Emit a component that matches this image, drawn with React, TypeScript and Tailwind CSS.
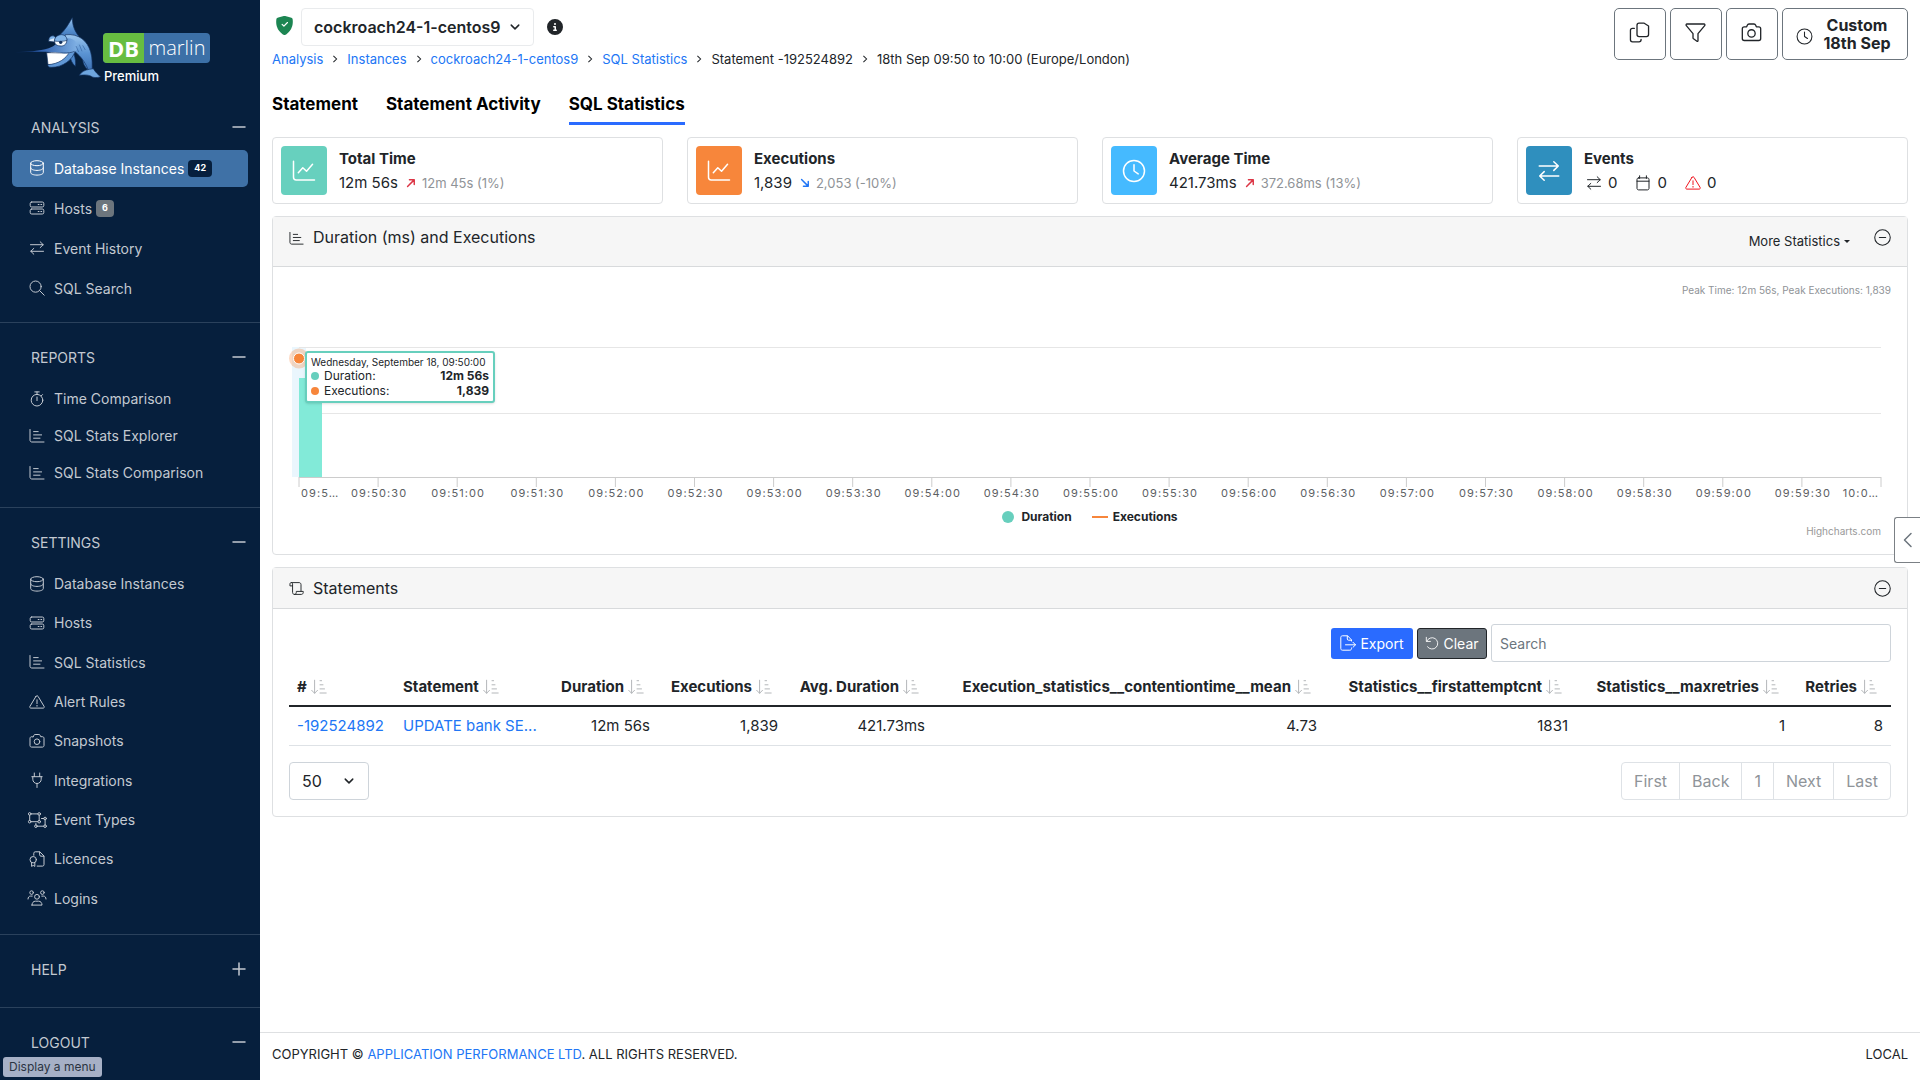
import React from "react";
import { BsShieldFillCheck } from "react-icons/bs";
import { FaCircleInfo } from "react-icons/fa6";

const icons: Record<string, React.ReactNode> = {
  database: (
    <>
      <ellipse cx="8" cy="3.2" rx="6.3" ry="2.5" />
      <path d="M1.7 3.2v9.4c0 1.4 2.8 2.5 6.3 2.5s6.3-1.1 6.3-2.5V3.2M1.7 7.9c0 1.4 2.8 2.5 6.3 2.5s6.3-1.1 6.3-2.5" />
    </>
  ),
  hosts: (
    <>
      <rect x="1.2" y="2" width="13.6" height="5" rx="1.5" />
      <rect x="1.2" y="9" width="13.6" height="5" rx="1.5" />
      <path d="M9.2 4.5h.8M11.9 4.5h.8M9.2 11.5h.8M11.9 11.5h.8" />
    </>
  ),
  swap: <path d="M1.5 4.7h12.7M11.2 1.8l3 2.9-3 2.9M14.5 11.3H1.8M4.8 8.4l-3 2.9 3 2.9" />,
  search: (
    <>
      <circle cx="6.6" cy="6.6" r="5.6" />
      <path d="M10.7 10.7l4.5 4.5" />
    </>
  ),
  stopwatch: (
    <>
      <circle cx="8" cy="9.2" r="5.8" />
      <path d="M5.8.9h4.4M8 .9v2.4M8 6v3.6M12.3 4.8l1.2-1.2" />
    </>
  ),
  chartBar: <path d="M1 1.5v10.7c0 1 .8 1.8 1.8 1.8H15M4.6 3.6h4.6M4.6 6.9h8M4.6 10.2h6.4" />,
  warning: (
    <>
      <path d="M7 2.3.9 12.4c-.5.8 0 1.7 1 1.7h12.2c1 0 1.5-.9 1-1.7L9 2.3c-.5-.8-1.5-.8-2 0z" />
      <path d="M8 5.8v3.8M8 11.4v.8" />
    </>
  ),
  camera: (
    <>
      <path d="M4.3 3.7 4.8 2.4c.2-.5.7-.9 1.3-.9h3.8c.6 0 1.1.4 1.3.9l.5 1.3h1.8c.8 0 1.5.7 1.5 1.5v7.4c0 .8-.7 1.5-1.5 1.5h-11c-.8 0-1.5-.7-1.5-1.5V5.2c0-.8.7-1.5 1.5-1.5z" />
      <circle cx="8" cy="8.7" r="2.8" />
    </>
  ),
  plug: <path d="M5.3 1v3.6M10.7 1v3.6M2.8 4.7h10.4M3.8 4.7v2.6a4.2 4.2 0 0 0 8.4 0V4.7M8 11.5V15.5" />,
  objectGroup: (
    <>
      <path d="M.7 3.2v5.200M10.200 3.200v5.200M2 1.900h6.900M2 9.700h6.900" />
      <circle cx=".7" cy="1.900" r="1.300" />
      <circle cx="10.200" cy="1.900" r="1.300" />
      <circle cx=".7" cy="9.700" r="1.300" />
      <circle cx="10.200" cy="9.700" r="1.300" />
      <path d="M12.500 6.500h2.300M16.100 7.800v5.100M8.200 14.200h6.600M6.900 11.500v1.400" />
      <circle cx="16.100" cy="6.500" r="1.300" />
      <circle cx="16.100" cy="14.200" r="1.300" />
      <circle cx="6.900" cy="14.200" r="1.300" />
    </>
  ),
  licence: (
    <>
      <path d="M4.8 4.3V2.200C4.800 1.400 5.400.8 6.200.8h4.600l4.200 4.200v8.700c0 .8-.6 1.400-1.400 1.400H8.200M10.600 1v2.800c0 .8.600 1.400 1.400 1.400h2.800" />
      <circle cx="4.200" cy="8.700" r="3.200" />
      <path d="M2.600 11.600v3.800l1.600-1 1.600 1v-3.800" />
    </>
  ),
  users: (
    <>
      <circle cx="2.600" cy="2.600" r="1.800" />
      <circle cx="13.400" cy="2.600" r="1.800" />
      <circle cx="8" cy="6.800" r="2.400" />
      <path d="M3 15.100h10c0-2.400-1.400-3.900-3.400-3.900H6.400c-2 0-3.400 1.500-3.400 3.900zM-1 9c0-1.700 1-2.900 2.500-2.900h1.700M17 9c0-1.700-1-2.900-2.500-2.900h-1.700" />
    </>
  ),
  minus: <path d="M2 8h12" strokeWidth="1.500" />,
  plus: <path d="M2 8h12M8 2v12" strokeWidth="1.500" />,
  chartLine: <path d="M1 1.500v10.700c0 1 .8 1.800 1.800 1.800H15M4.200 9.200l3-3.400 2.500 2.400 4-4.700" />,
  clock: (
    <>
      <circle cx="8" cy="8" r="7" />
      <path d="M8 3.800V8l2.800 1.900" />
    </>
  ),
  calendar: (
    <path d="M4.600.8v2.600M11.400.8v2.600M2 6.200h12M3.500 2.900h9c.8 0 1.500.7 1.500 1.500v9c0 .8-.7 1.500-1.500 1.500h-9c-.8 0-1.500-.7-1.500-1.500v-9c0-.8.7-1.500 1.500-1.500z" />
  ),
  circleMinus: (
    <>
      <circle cx="8" cy="8" r="7.300" />
      <path d="M5 8h6" />
    </>
  ),
  scroll: (
    <>
      <path d="M3.800 5.200H1V3.300c0-.9.600-1.600 1.400-1.600s1.400.7 1.400 1.600v8.900c0 1.200.9 2.100 2 2.100s2-.9 2-2.100v-1.100h7.400v1.100c0 1.200-.9 2.100-2 2.100H5.800" />
      <path d="M2.400 1.700h8.300c1.200 0 2.100.9 2.100 2.100v7" />
    </>
  ),
  sort: <path d="M3.600 1.200v13M.7 11.300l2.900 3 2.900-3M9 1.700h1.600M9 5.800h3M9 9.900h4.500M9 14h6.200" />,
  copy: (
    <>
      <path d="M7.700.8h3.600L14.900 3v6.600c0 .9-.7 1.600-1.600 1.600H7.700c-.9 0-1.600-.7-1.600-1.600V2.400C6.100 1.500 6.800.8 7.700.8z" />
      <path d="M4.100 4.800H2.700c-.9 0-1.600.7-1.600 1.600v7.200c0 .9.700 1.600 1.600 1.600h4.900c.9 0 1.600-.7 1.600-1.600v-.4" />
    </>
  ),
  filter: (
    <path d="M1.500 1.500h13c.6 0 .9.700.5 1.200L9.900 8.900v5.400c0 .4-.5.600-.8.400l-2.600-1.900c-.3-.2-.4-.4-.4-.7V8.900L1 2.700c-.4-.5-.1-1.200.5-1.200z" />
  ),
  exportFile: (
    <>
      <path d="M11.500 6V4.900L7.600.8H2.400C1.500.8.800 1.500.800 2.400v11.200c0 .9.700 1.600 1.600 1.600h7.500c.9 0 1.600-.7 1.600-1.600V13M7.300 1v3c0 .7.500 1.200 1.200 1.200h2.800" />
      <path d="M5.500 9.800h10M13 7.300l2.500 2.500-2.500 2.500" />
    </>
  ),
  undo: <path d="M1.500 1.500v4.700h4.700M2 6a6.500 6.500 0 1 1 .8 6.300" />,
  chevronDown: <path d="M3 5.500l5 5 5-5" strokeWidth="2" />,
  chevronLeft: <path d="M11 1.500 4.500 8l6.500 6.500" strokeWidth="1.500" />,
  upRight: <path d="M2.500 13.500 13 3M5.500 2.800H13.200V10.500" strokeWidth="2.300" />,
  downRight: <path d="M2.500 2.500 13 13M13.200 5.500V13.200H5.500" strokeWidth="2.300" />,
};

function Icon({ name, className = "size-4" }: { name: string; className?: string }) {
  return (
    <svg
      viewBox="0 0 16 16"
      fill="none"
      stroke="currentColor"
      strokeWidth="1"
      strokeLinecap="round"
      strokeLinejoin="round"
      aria-hidden="true"
      className={`inline-block shrink-0 overflow-visible ${className}`}
    >
      {icons[name]}
    </svg>
  );
}

function Marlin() {
  return (
    <svg viewBox="0 0 300 225" className="h-[75px] w-[100px]" aria-label="Marlin" role="img">
      <defs>
        <linearGradient id="body" x1="0" y1="0" x2="0" y2="1">
          <stop offset="0" stopColor="#9cc6ee" />
          <stop offset="0.500" stopColor="#5b94d3" />
          <stop offset="1" stopColor="#3a6fb4" />
        </linearGradient>
        <linearGradient id="bill" x1="0" y1="0" x2="1" y2="0">
          <stop offset="0" stopColor="#0b2a6a" stopOpacity="0.500" />
          <stop offset="0.400" stopColor="#2b5cab" />
          <stop offset="1" stopColor="#7fb0e4" />
        </linearGradient>
      </defs>
      <g stroke="#12305f" strokeWidth="2" strokeLinejoin="round">
        <path d="M150 74C166 60 178 38 187 23c0 20 5 38 20 56l-30 8z" fill="url(#body)" />
        <path d="M180 138c2 12 6 22 16 31 2-12 0-24-4-36zM218 146c0 14 6 24 16 33 2-10 2-18-2-30z" fill="#4c86c9" />
        <path d="M166 74c40-4 66 18 76 52 6 20 4 40 5 58l-10 2c-8-24-22-46-46-64l-30-16z" fill="url(#body)" />
        <path d="M238 178c-14 2-24 8-30 18 14-2 24-2 34 2 8 6 18 6 30 2-8-6-16-14-22-24z" fill="#6ea6df" />
        <path d="M110 128l4 36c26 4 52-10 66-30l-6-16z" fill="#fff" />
        <path d="M114 164c-2 4 2 8 10 8 34 0 64-22 72-50l-16 2c-12 22-34 38-66 40z" fill="#6198d6" />
        <path d="M12 127c40-1 76-4 104-12 20-6 30-24 54-30 24-2 36 16 30 34-6 12-24 14-50 9-40-4-90-2-138-1z" fill="url(#bill)" stroke="none" />
        <path d="M110 128c40 0 66 4 84-4" fill="none" />
        <path d="M116 94c0-12 14-18 20-8l-2 10z" fill="#dcebfa" />
        <path d="M134 94c2-18 30-24 36-6 2 12-6 20-16 20-12 0-20-4-20-14z" fill="#f5faff" />
        <path d="M116 90c2-14 16-16 21-7M133 93c2-24 38-26 38-2-12 4-26 4-38 2z" fill="#7fb3e8" />
      </g>
      <circle cx="152" cy="97" r="5" fill="#12305f" />
      <path d="M198 108l8 18M208 104l8 20M218 106l8 14" stroke="#25508f" strokeWidth="1.500" fill="none" />
    </svg>
  );
}

type Item = { icon: string; label: string; badge?: string; active?: boolean };
type Section = { title: string; open: boolean; list: string; items: Item[] };

const sections: Section[] = [
  {
    title: "ANALYSIS",
    open: true,
    list: "auto-rows-[40px] pb-[14px]",
    items: [
      { icon: "database", label: "Database Instances", badge: "42", active: true },
      { icon: "hosts", label: "Hosts", badge: "6" },
      { icon: "swap", label: "Event History" },
      { icon: "search", label: "SQL Search" },
    ],
  },
  {
    title: "REPORTS",
    open: true,
    list: "auto-rows-[37px] pt-[2px] pb-4",
    items: [
      { icon: "stopwatch", label: "Time Comparison" },
      { icon: "chartBar", label: "SQL Stats Explorer" },
      { icon: "chartBar", label: "SQL Stats Comparison" },
    ],
  },
  {
    title: "SETTINGS",
    open: true,
    list: "h-[371px] auto-rows-fr pt-px pb-4",
    items: [
      { icon: "database", label: "Database Instances" },
      { icon: "hosts", label: "Hosts" },
      { icon: "chartBar", label: "SQL Statistics" },
      { icon: "warning", label: "Alert Rules" },
      { icon: "camera", label: "Snapshots" },
      { icon: "plug", label: "Integrations" },
      { icon: "objectGroup", label: "Event Types" },
      { icon: "licence", label: "Licences" },
      { icon: "users", label: "Logins" },
    ],
  },
  { title: "HELP", open: false, list: "pb-[17px]", items: [] },
  { title: "LOGOUT", open: true, list: "", items: [] },
];

function Sidebar() {
  return (
    <aside className="sticky top-0 h-screen w-[260px] shrink-0 overflow-hidden bg-[#061f3d] text-[#c3c9d1]">
      <div className="flex h-[93px] pt-[10px] pl-[10px]">
        <Marlin />
        <div className="-ml-[7px] pt-[23px]">
          <div className="flex h-[30px] w-[107px] items-center overflow-hidden rounded-[4px] bg-[#3c70a7] leading-none text-white">
            <span className="flex h-full w-[41px] items-center justify-center bg-[#67bd41] font-['Open_Sans'] text-[22px] font-bold">DB</span>
            <span className="flex-1 pb-px text-center font-['Open_Sans'] text-[20px] font-light">marlin</span>
          </div>
          <div className="mt-[3px] pl-px text-[13px] leading-5 font-medium text-white">Premium</div>
        </div>
      </div>
      <nav>
        {sections.map((s, i) => (
          <section key={s.title} className={i ? "border-t border-[#2a415c] pt-[13px]" : "pt-[13px]"}>
            <button className="flex h-[42px] w-full items-center justify-between pr-[13px] pl-[31px] text-[14px]">
              {s.title}
              <Icon name={s.open ? "minus" : "plus"} />
            </button>
            <ul className={`grid ${s.list}`}>
              {s.items.map((it) => (
                <li key={it.label} className="flex items-center px-3">
                  <a
                    href="#"
                    className={`flex h-[37px] w-full items-center rounded-[5px] pl-[17px] text-[14px] ${it.active ? "bg-[#3f71a6] text-white" : ""}`}
                  >
                    <Icon name={it.icon} />
                    <span className="ml-[9px]">{it.label}</span>
                    {it.badge && (
                      <span
                        className={`ml-1 flex h-[17px] items-center rounded-[4px] px-[6px] text-[9px] font-bold text-white ${it.active ? "bg-[#061f3d]" : "bg-[#6c757d]"}`}
                      >
                        {it.badge}
                      </span>
                    )}
                  </a>
                </li>
              ))}
            </ul>
          </section>
        ))}
      </nav>
      <div className="absolute bottom-[3px] left-[3px] rounded-[3px] bg-[#a6b0c6] px-[6px] text-[12px] leading-5 text-[#2b3442]">Display a menu</div>
    </aside>
  );
}

const crumbs = ["Analysis", "Instances", "cockroach24-1-centos9", "SQL Statistics"];

function Chevron() {
  return (
    <svg viewBox="0 0 6 10" className="mx-[9px] h-[8px] w-[6px]" fill="none" stroke="#212529" strokeWidth="1.300" aria-hidden="true">
      <path d="M1 1l4 4-4 4" />
    </svg>
  );
}

function Header() {
  return (
    <header className="flex justify-between pt-2">
      <div>
        <div className="flex items-center">
          <BsShieldFillCheck className="mx-[3px] mb-1 size-[19px] text-[#1c8552]" />
          <button className="ml-1 flex h-[38px] items-center gap-2 rounded border border-[#e9ebed] px-3 text-[16px] font-semibold">
            cockroach24-1-centos9
            <Icon name="chevronDown" className="size-3" />
          </button>
          <FaCircleInfo className="ml-[13px] size-4" />
        </div>
        <nav className="mt-[3px] flex items-center text-[13px] leading-5">
          {crumbs.map((c) => (
            <React.Fragment key={c}>
              <a href="#" className="text-[#2176f5]">{c}</a>
              <Chevron />
            </React.Fragment>
          ))}
          <span>Statement -192524892</span>
          <Chevron />
          <span>18th Sep 09:50 to 10:00 (Europe/London)</span>
        </nav>
      </div>
      <div className="flex h-[52px] gap-1">
        {["copy", "filter", "camera"].map((n) => (
          <button key={n} aria-label={n} className="flex w-[52px] items-center justify-center rounded-[5px] border border-[#6c757d] pr-[2px] pb-1">
            <Icon name={n} className="size-[21px]" />
          </button>
        ))}
        <button className="flex w-[126px] items-center rounded-[5px] border border-[#6c757d] pr-[6px] pl-[13px] text-[16px] leading-[18px] font-bold">
          <Icon name="clock" className="mt-1 size-[17px]" />
          <span className="flex-1 text-center">
            Custom
            <br />
            18th Sep
          </span>
        </button>
      </div>
    </header>
  );
}

function Stat({ icon, color, title, children }: { icon: string; color: string; title: string; children: React.ReactNode }) {
  return (
    <div className="flex h-[67px] items-center rounded border border-[#dee0e2] pl-2">
      <div className={`flex h-[49px] w-[46px] items-center justify-center rounded text-white ${color}`}>
        <Icon name={icon} className="size-6" />
      </div>
      <div className="ml-3">
        <h2 className="text-[15px] leading-6 font-bold">{title}</h2>
        <div className="flex items-center text-[15px] leading-6">{children}</div>
      </div>
    </div>
  );
}

function Change({ value, up, previous }: { value: string; up: boolean; previous: string }) {
  return (
    <>
      {value}
      <Icon name={up ? "upRight" : "downRight"} className={up ? "mt-px mr-[6px] ml-2 size-[10px] text-[#dc3545]" : "mt-px mr-[6px] ml-2 size-[10px] text-[#2176f5]"} />
      <span className="text-[13px] text-[#8f9397]">{previous}</span>
    </>
  );
}

const times = Array.from({ length: 21 }, (_, i) => {
  if (i === 0) return "09:5…";
  if (i === 20) return "10:0…";
  return `09:${50 + Math.floor(i / 2)}:${i % 2 ? "30" : "00"}`;
});

function Chart() {
  return (
    <div className="relative pt-[13px] pb-[17px]">
      <p className="pr-4 text-right text-[10px] leading-5 text-[#8f9397]">Peak Time: 12m 56s, Peak Executions: 1,839</p>
      <div className="relative mr-[26px] ml-[26px]">
        <svg className="block h-[209px] w-full overflow-visible" role="img" aria-label="Duration and executions">
          <path d="M-7 47h14v130h-14z" fill="#eaf6fd" />
          <g stroke="#e6e6e6">
            <line x1="0" x2="100%" y1="47.500" y2="47.500" />
            <line x1="0" x2="100%" y1="113.500" y2="113.500" />
          </g>
          <rect x="0" y="78" width="23" height="99" fill="#82ead8" />
          <circle cx="0" cy="58.500" r="10" fill="#f7863b" fillOpacity="0.300" />
          <circle cx="0" cy="58.500" r="5.500" fill="#f7863b" stroke="#fff" />
          <line x1="0" x2="100%" y1="177.500" y2="177.500" stroke="#cccccc" />
          {times.map((t, i) => (
            <React.Fragment key={t}>
              <line x1={`${i * 5}%`} x2={`${i * 5}%`} y1="177" y2="187" stroke="#cccccc" />
              <text
                x={`${i * 5}%`}
                y="197"
                dx={i === 0 ? 2 : i === 20 ? -2 : 1}
                textAnchor={i === 0 ? "start" : i === 20 ? "end" : "middle"}
                className="fill-[#5c6063] text-[11px] tracking-widest"
              >
                {t}
              </text>
            </React.Fragment>
          ))}
        </svg>
        <div className="absolute top-[51px] left-[6px] w-[190px] rounded-[3px] border-2 border-[#67cfbd] bg-white px-[4px] py-[3px] text-[12px] leading-[15px] shadow-sm">
          <div className="text-[10px] leading-3 whitespace-nowrap">Wednesday, September 18, 09:50:00</div>
          {[
            ["bg-[#67cfbd]", "Duration:", "12m 56s"],
            ["bg-[#f7863b]", "Executions:", "1,839"],
          ].map(([dot, k, v]) => (
            <div key={k} className="flex items-center">
              <i className={`mr-[5px] size-2 rounded-full ${dot}`} />
              <span className="flex-1">{k}</span>
              <b className="font-bold">{v}</b>
            </div>
          ))}
        </div>
        <div className="flex justify-center gap-5 text-[12px] leading-4 font-bold">
          <span className="flex items-center gap-[7px]">
            <i className="size-3 rounded-full bg-[#67cfbd]" />
            Duration
          </span>
          <span className="flex items-center gap-[5px]">
            <i className="h-[2px] w-4 bg-[#f7863b]" />
            Executions
          </span>
        </div>
        <div className="text-right text-[10px] leading-3 text-[#999]">
          <a href="#">Highcharts.com</a>
        </div>
      </div>
    </div>
  );
}

const columns: [string, string, string][] = [
  ["#", "-192524892", "w-[106px]"],
  ["Statement", "UPDATE bank SE...", "w-[150px]"],
  ["Duration", "12m 56s", "w-[113px]"],
  ["Executions", "1,839", "w-[128px]"],
  ["Avg. Duration", "421.73ms", "w-[147px]"],
  ["Execution_statistics__contentiontime__mean", "4.73", "w-[392px]"],
  ["Statistics__firstattemptcnt", "1831", "w-[251px]"],
  ["Statistics__maxretries", "1", "w-[217px]"],
  ["Retries", "8", "w-[98px]"],
];

function Statements() {
  return (
    <div className="px-4 pt-[15px] pb-4">
      <div className="flex items-center justify-end gap-1 text-[14px]">
        <button className="flex h-[31px] w-[82px] items-center justify-center gap-1 rounded-[3px] bg-[#2a6bff] text-white">
          <Icon name="exportFile" />
          Export
        </button>
        <button className="flex h-[31px] w-[70px] items-center justify-center gap-1 rounded-[3px] border border-[#212529] bg-[#6c757d] text-white">
          <Icon name="undo" className="size-[14px]" />
          Clear
        </button>
        <input aria-label="Search" placeholder="Search" className="h-[38px] w-[400px] rounded-[3px] border border-[#ced4da] px-2 placeholder:text-[#6c757d]" />
      </div>
      <table className="mt-[7px] w-full table-fixed text-[15px] whitespace-nowrap">
        <thead>
          <tr className="h-[37px] border-b-2 border-[#212529]">
            {columns.map(([h, , w], i) => (
              <th key={h} scope="col" className={`px-2 font-bold ${w} ${i < 2 ? "text-left" : "pr-[14px] text-right"}`}>
                <span className="inline-flex items-center gap-1">
                  {h}
                  <Icon name="sort" className="size-4 text-[#b4b7ba]" />
                </span>
              </th>
            ))}
          </tr>
        </thead>
        <tbody>
          <tr className="h-[39px] border-b border-[#dee2e6]">
            {columns.map(([h, v], i) => (
              <td key={h} className={i < 2 ? "px-2 pt-px" : "px-2 pt-px text-right"}>
                {i < 2 ? <a href="#" className="text-[#2176f5]">{v}</a> : v}
              </td>
            ))}
          </tr>
        </tbody>
      </table>
      <div className="mt-4 flex justify-between text-[16px]">
        <div className="relative">
          <select aria-label="Rows per page" className="h-[38px] w-20 appearance-none rounded border border-[#ced4da] bg-white pl-3">
            <option>50</option>
          </select>
          <Icon name="chevronDown" className="pointer-events-none absolute top-[13px] right-[14px] size-3" />
        </div>
        <div className="flex h-[38px] divide-x divide-[#dee2e6] rounded border border-[#dee2e6] text-[#8f9499]">
          {["First", "Back", "1", "Next", "Last"].map((p) => (
            <button key={p} className="px-3">{p}</button>
          ))}
        </div>
      </div>
    </div>
  );
}

export default function App() {
  return (
    <div className="flex min-h-screen bg-white font-['Inter',sans-serif] text-[#212529]">
      <Sidebar />
      <div className="flex min-w-0 flex-1 flex-col">
        <main className="flex-1 px-3">
          <Header />
          <div role="tablist" className="mt-[19px] flex h-[37px] gap-7 text-[17px] font-bold text-black">
            {["Statement", "Statement Activity", "SQL Statistics"].map((t, i) => (
              <button key={t} role="tab" aria-selected={i === 2} className={`border-b-3 pb-px ${i === 2 ? "border-[#2a6bff]" : "border-transparent"}`}>
                {t}
              </button>
            ))}
          </div>
          <div className="mt-3 grid grid-cols-4 gap-6">
            <Stat icon="chartLine" color="bg-[#67d0be]" title="Total Time">
              <Change value="12m 56s" up previous="12m 45s (1%)" />
            </Stat>
            <Stat icon="chartLine" color="bg-[#f7863b]" title="Executions">
              <Change value="1,839" up={false} previous="2,053 (-10%)" />
            </Stat>
            <Stat icon="clock" color="bg-[#45baff]" title="Average Time">
              <Change value="421.73ms" up previous="372.68ms (13%)" />
            </Stat>
            <Stat icon="swap" color="bg-[#2f8fbe]" title="Events">
              <Icon name="swap" className="mr-[6px] ml-[2px] size-4" />0
              <Icon name="calendar" className="mr-[6px] ml-[18px] size-4" />0
              <Icon name="warning" className="mr-[6px] ml-[18px] size-4 text-[#f0141e]" />0
            </Stat>
          </div>
          <section className="mt-3 rounded border border-[#dee0e2]">
            <div className="flex h-[50px] items-start border-b border-[#d8dadc] bg-[#f6f6f6] px-4 pt-2">
              <Icon name="chartBar" className="mt-[6px] size-[15px]" />
              <h2 className="ml-[9px] flex-1 text-[16px] leading-6">Duration (ms) and Executions</h2>
              <button className="mt-[6px] mr-6 flex items-center gap-1 text-[13px] leading-5">
                More Statistics
                <span className="border-x-3 border-t-3 border-x-transparent border-t-[#212529]" />
              </button>
              <button aria-label="Collapse chart" className="mt-1 flex">
                <Icon name="circleMinus" className="size-[17px]" />
              </button>
            </div>
            <Chart />
          </section>
          <section className="mt-3 rounded border border-[#dee0e2]">
            <div className="flex h-[41px] items-center border-b border-[#d8dadc] bg-[#f6f6f6] px-4">
              <Icon name="scroll" className="size-[15px]" />
              <h2 className="ml-[9px] flex-1 text-[16px] leading-6">Statements</h2>
              <button aria-label="Collapse statements" className="flex">
                <Icon name="circleMinus" className="size-[17px]" />
              </button>
            </div>
            <Statements />
          </section>
        </main>
        <footer className="flex h-[48px] items-center justify-between border-t border-[#dee0e2] px-3 pb-1 text-[13px]">
          <p>
            COPYRIGHT © <a href="#" className="text-[#2176f5]">APPLICATION PERFORMANCE LTD</a>. ALL RIGHTS RESERVED.
          </p>
          <p>LOCAL</p>
        </footer>
      </div>
      <button aria-label="Open panel" className="fixed top-[517px] right-0 flex h-[46px] w-[26px] items-center justify-center rounded-l-[3px] border border-r-0 border-[#7b8085] bg-white text-[#6c757d]">
        <Icon name="chevronLeft" />
      </button>
    </div>
  );
}
